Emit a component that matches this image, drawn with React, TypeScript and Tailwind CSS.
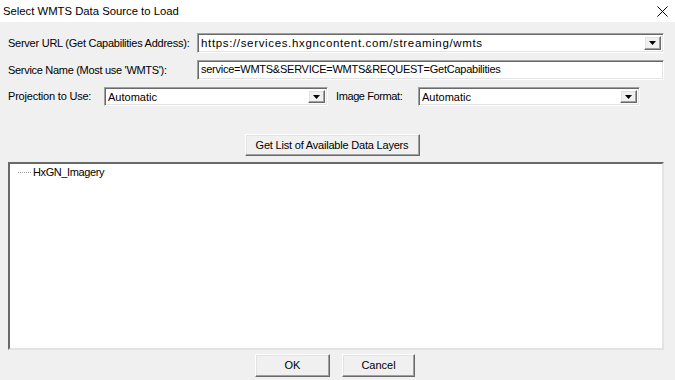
import React from 'react';

const sunken =
  'border border-t-[#a0a0a0] border-l-[#a0a0a0] border-r-white border-b-white shadow-[inset_1px_1px_0_#696969,inset_-1px_-1px_0_#e3e3e3]';
const raised =
  'border border-t-white border-l-white border-r-[#696969] border-b-[#696969] shadow-[inset_-1px_-1px_0_#a0a0a0,inset_1px_1px_0_#e3e3e3] bg-[#f0f0f0]';

const DropButton: React.FC = () => (
  <div className={`${raised} w-[17px] h-full flex items-center justify-center shrink-0`}>
    <svg width="7" height="4" viewBox="0 0 7 4">
      <path d="M0 0h7L3.5 4z" fill="#000" />
    </svg>
  </div>
);

const Combo: React.FC<{ value: string; className: string; textClass?: string }> = ({
  value,
  className,
  textClass = '',
}) => (
  <div className={`${sunken} bg-white flex items-stretch p-[2px] ${className}`}>
    <div className={`flex-1 pl-[1px] leading-[14px] whitespace-nowrap overflow-hidden ${textClass}`}>{value}</div>
    <DropButton />
  </div>
);

const App: React.FC = () => {
  return (
    <div
      className="w-[675px] h-[380px] flex flex-col overflow-hidden text-[11px] text-black bg-[#f0f0f0]"
      style={{ fontFamily: '"Liberation Sans", Arial, sans-serif' }}
    >
      {/* title bar */}
      <div className="h-[22px] bg-white flex items-center justify-between pl-[3px] pr-[7px] shrink-0">
        <span className="text-[11.3px] text-black">Select WMTS Data Source to Load</span>
        <svg width="11" height="11" viewBox="0 0 11 11">
          <path d="M0.5 0.5l10 10M10.5 0.5l-10 10" stroke="#000" strokeWidth="1" />
        </svg>
      </div>

      <div className="flex flex-col pl-[8px] pr-[11px] pt-[11px]">
        <div className="flex items-center h-[20px]">
          <span className="w-[189px] shrink-0 whitespace-nowrap tracking-[-0.25px]">
            Server URL (Get Capabilities Address):
          </span>
          <Combo
            value="https://services.hxgncontent.com/streaming/wmts"
            className="w-[467px] h-[20px]"
            textClass="text-[11.5px] tracking-[0.65px]"
          />
        </div>

        <div className="flex items-center h-[20px] mt-[7px]">
          <span className="w-[189px] shrink-0 whitespace-nowrap tracking-[-0.3px]">
            Service Name (Most use 'WMTS'):
          </span>
          <div className={`${sunken} bg-white w-[467px] h-[20px] pl-[3px] leading-[16px] tracking-[-0.25px]`}>
            service=WMTS&amp;SERVICE=WMTS&amp;REQUEST=GetCapabilities
          </div>
        </div>

        <div className="flex items-center h-[19px] mt-[7px]">
          <span className="w-[96px] shrink-0 whitespace-nowrap tracking-[-0.2px]">Projection to Use:</span>
          <Combo value="Automatic" className="w-[224px] h-[19px]" />
          <span className="ml-[8px] w-[82px] shrink-0 whitespace-nowrap tracking-[-0.4px]">Image Format:</span>
          <Combo value="Automatic" className="w-[222px] h-[19px]" />
        </div>

        <div className="flex justify-center mt-[28px]">
          <button className={`${raised} w-[175px] h-[22px] ml-[-8px] text-[11px] tracking-[-0.2px]`}>
            Get List of Available Data Layers
          </button>
        </div>

        <div className="mt-[6px] w-[656px] h-[188px] bg-white border-2 border-t-[#696969] border-l-[#696969] border-r-[#e3e3e3] border-b-[#e3e3e3] pl-[8px]">
          <div className="flex items-center">
            <span className="w-[13px] border-t border-dotted border-[#a0a0a0] mr-[2px]" />
            <span className="tracking-[-0.4px]">HxGN_Imagery</span>
          </div>
        </div>

        <div className="flex mt-[4px] pl-[247px] gap-[12px]">
          <button className={`${raised} w-[75px] h-[23px] text-[11px]`}>OK</button>
          <button className={`${raised} w-[73px] h-[23px] text-[11px]`}>Cancel</button>
        </div>
      </div>
    </div>
  );
};

export default App;
